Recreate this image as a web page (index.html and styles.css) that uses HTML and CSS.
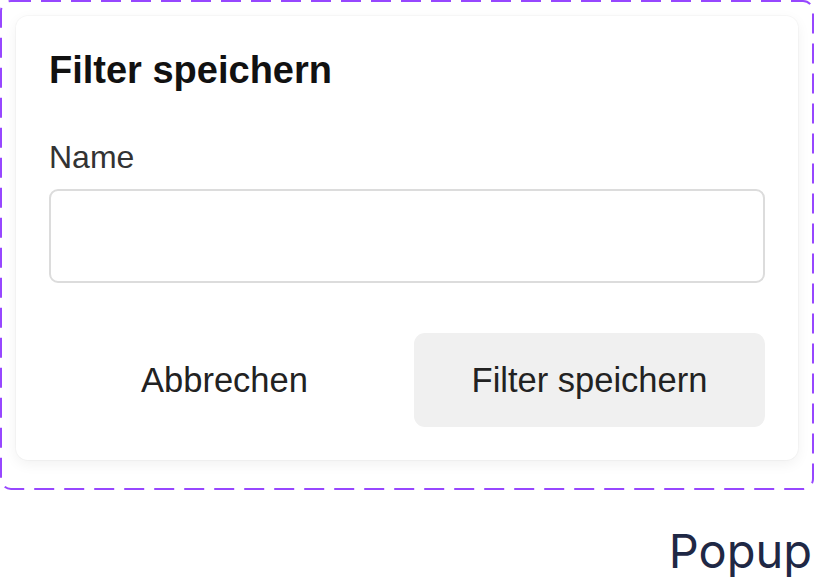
FILE: index.html
```html
<!DOCTYPE html>
<html lang="de">
<head>
<meta charset="utf-8">
<title>Popup</title>
<link rel="stylesheet" href="styles.css">
</head>
<body>
<div class="frame">
  <svg class="frame-border" width="814" height="490" viewBox="0 0 814 490" aria-hidden="true">
    <rect x="1" y="1" width="812" height="488" rx="10" ry="10" fill="none" stroke="#9747FF" stroke-width="2" stroke-dasharray="20 10"/>
  </svg>
  <div class="card">
    <h1 class="title">Filter speichern</h1>
    <label class="label" for="name">Name</label>
    <input class="input" id="name" type="text">
    <div class="actions">
      <button class="btn btn-ghost" type="button">Abbrechen</button>
      <button class="btn btn-fill" type="button">Filter speichern</button>
    </div>
  </div>
</div>
<div class="caption">Popup</div>
</body>
</html>
```

FILE: styles.css
```css
html, body {
  margin: 0;
  padding: 0;
  background: #ffffff;
}

body {
  width: 814px;
  font-family: "Liberation Sans", Arial, sans-serif;
}

.frame {
  position: relative;
  width: 814px;
  height: 490px;
  box-sizing: border-box;
  padding: 16px;
}

.frame-border {
  position: absolute;
  left: 0;
  top: 0;
  pointer-events: none;
}

.card {
  width: 782px;
  height: 444px;
  box-sizing: border-box;
  padding: 32px 33px 33px 33px;
  background: #ffffff;
  border-radius: 12px;
  box-shadow: 0 0 0 1px rgba(0, 0, 0, 0.025), 0 4px 14px rgba(0, 0, 0, 0.06);
  display: flex;
  flex-direction: column;
}

.title {
  margin: 0;
  font-size: 38px;
  line-height: 44px;
  font-weight: 700;
  color: #111111;
}

.label {
  margin-top: 47px;
  font-size: 32px;
  line-height: 36px;
  color: #333333;
}

.input {
  margin-top: 14px;
  height: 94px;
  box-sizing: border-box;
  border: 2px solid #dcdcdc;
  border-radius: 9px;
  background: #ffffff;
  outline: none;
  padding: 0 20px;
  font: inherit;
}

.actions {
  margin-top: 50px;
  display: grid;
  grid-template-columns: 1fr 1fr;
  gap: 14px;
}

.btn {
  height: 94px;
  border: none;
  border-radius: 11px;
  font-family: "Liberation Sans", Arial, sans-serif;
  font-size: 34.5px;
  color: #222222;
  padding: 0;
}

.btn-ghost {
  background: transparent;
}

.btn-fill {
  background: #f0f0f0;
}

.caption {
  margin-top: 33px;
  padding-right: 2px;
  text-align: right;
  font-family: Inter, "Noto Sans", sans-serif;
  font-size: 47px;
  line-height: 56px;
  color: #1f2845;
}
```
